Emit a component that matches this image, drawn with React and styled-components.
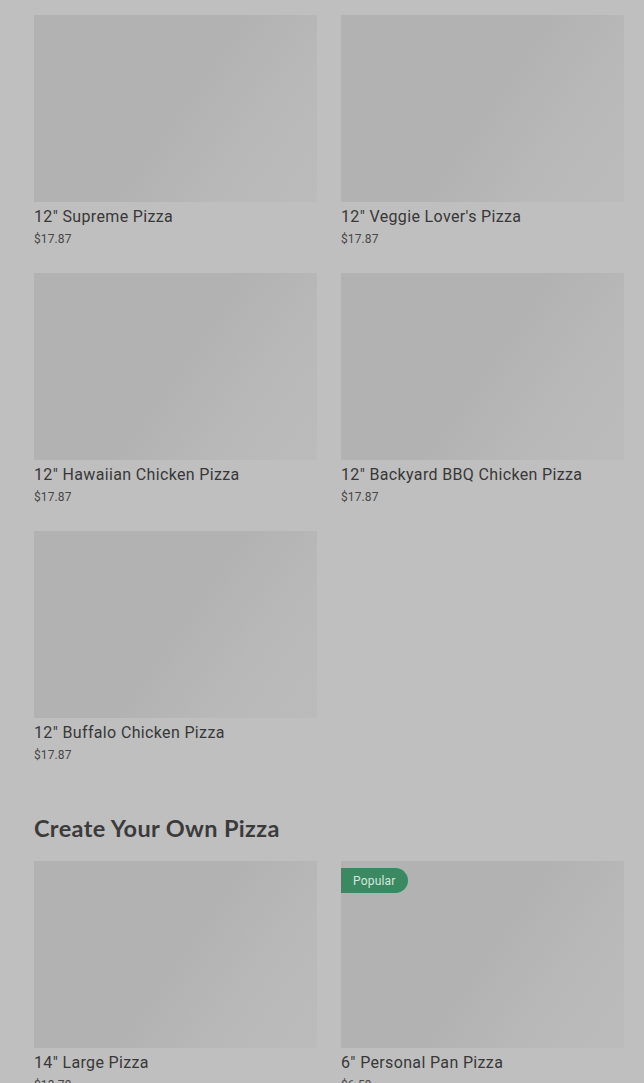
import React from "react";
import styled, { createGlobalStyle } from "styled-components";

const Global = createGlobalStyle`
  html, body { margin: 0; padding: 0; background: #bfbfbf; }
  body { font-family: Roboto, "Liberation Sans", sans-serif; overflow: hidden; }
`;

const Page = styled.div`
  padding: 15px 20px 0 34px;
  display: flex;
  flex-direction: column;
`;

const Section = styled.section`
  display: flex;
  flex-direction: column;
  & + & { margin-top: 50px; }
`;

const Heading = styled.h2`
  margin: 0 0 18px;
  font-family: Lato, "Open Sans", sans-serif;
  font-weight: 700;
  font-size: 23.5px;
  line-height: 30px;
  letter-spacing: 0.35px;
  color: #3b3b3b;
`;

const Grid = styled.div`
  display: grid;
  grid-template-columns: 283px 283px;
  column-gap: 24px;
  row-gap: 26px;
`;

const Card = styled.div`
  display: flex;
  flex-direction: column;
`;

const Thumb = styled.div`
  position: relative;
  flex: 0 0 187px;
  height: 187px;
  background: linear-gradient(125deg, #b2b2b2 0%, #b2b2b2 50%, #b9b9b9 78%, #bbbbbb 100%);
`;

const Badge = styled.span`
  position: absolute;
  top: 7px;
  left: 0;
  height: 25px;
  padding: 0 12px;
  display: flex;
  align-items: center;
  border-radius: 0 13px 13px 0;
  background: #3b8963;
  color: #d6e6dd;
  font-size: 12px;
  letter-spacing: 0.2px;
`;

const Title = styled.div`
  margin-top: 5px;
  font-size: 16px;
  line-height: 20px;
  letter-spacing: 0.35px;
  color: #383838;
`;

const Price = styled.div`
  margin-top: 4px;
  font-size: 12px;
  line-height: 16px;
  color: #474747;
  letter-spacing: 0.1px;
`;

const specialty = [
  '12" Supreme Pizza',
  '12" Veggie Lover\'s Pizza',
  '12" Hawaiian Chicken Pizza',
  '12" Backyard BBQ Chicken Pizza',
  '12" Buffalo Chicken Pizza',
].map((t) => ({ title: t, price: "$17.87" }));

const own = [
  { title: '14" Large Pizza', price: "$13.79" },
  { title: '6" Personal Pan Pizza', price: "$6.59", badge: "Popular" },
];

const Item = ({ title, price, badge }) => (
  <Card>
    <Thumb>{badge && <Badge>{badge}</Badge>}</Thumb>
    <Title>{title}</Title>
    <Price>{price}</Price>
  </Card>
);

export default function App() {
  return (
    <>
      <Global />
      <Page>
        <Section>
          <Grid>
            {specialty.map((p) => (
              <Item key={p.title} {...p} />
            ))}
          </Grid>
        </Section>
        <Section>
          <Heading>Create Your Own Pizza</Heading>
          <Grid>
            {own.map((p) => (
              <Item key={p.title} {...p} />
            ))}
          </Grid>
        </Section>
      </Page>
    </>
  );
}
